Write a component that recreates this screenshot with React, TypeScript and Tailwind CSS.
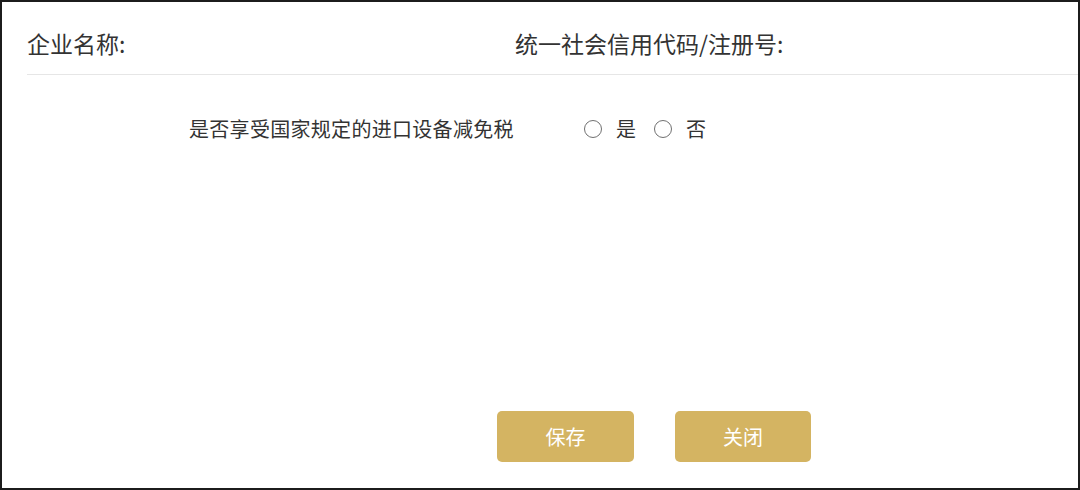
import * as React from "react";

const font = { fontFamily: '"Microsoft YaHei", "Noto Sans CJK SC", "Noto Sans", sans-serif' };

function Radio({ label }: { label: string }) {
    return (
        <label className="flex items-center cursor-pointer">
            <span className="w-[18px] h-[18px] rounded-full border-[1.5px] border-[#707070] bg-white" />
            <span className="ml-[14px] text-[20px] leading-[28px] text-[#333]">{label}</span>
        </label>
    );
}

export default function App() {
    return (
        <div className="w-[1080px] h-[490px] border-2 border-[#1c1c1c] bg-white flex flex-col overflow-hidden" style={font}>
            <header className="h-[73px] ml-[25px] pt-[26px] border-b border-[#e6e6e6] flex text-[23px] leading-[30px] text-[#333]">
                <div className="w-[488px]">企业名称:</div>
                <div>统一社会信用代码/注册号:</div>
            </header>

            <div className="mt-[40px] pl-[187px] flex items-center">
                <span className="w-[324px] text-[20px] tracking-[0.3px] leading-[28px] text-[#333] whitespace-nowrap">是否享受国家规定的进口设备减免税</span>
                <div className="ml-[71px] flex items-center gap-[18px]">
                    <Radio label="是" />
                    <Radio label="否" />
                </div>
            </div>

            <div className="flex-1" />

            <div className="pl-[495px] pb-[26px] flex gap-[41px]">
                <button className="w-[137px] h-[51px] rounded-[5px] bg-[#d4b462] text-white text-[20px]">保存</button>
                <button className="w-[136px] h-[51px] rounded-[5px] bg-[#d4b462] text-white text-[20px]">关闭</button>
            </div>
        </div>
    );
}
